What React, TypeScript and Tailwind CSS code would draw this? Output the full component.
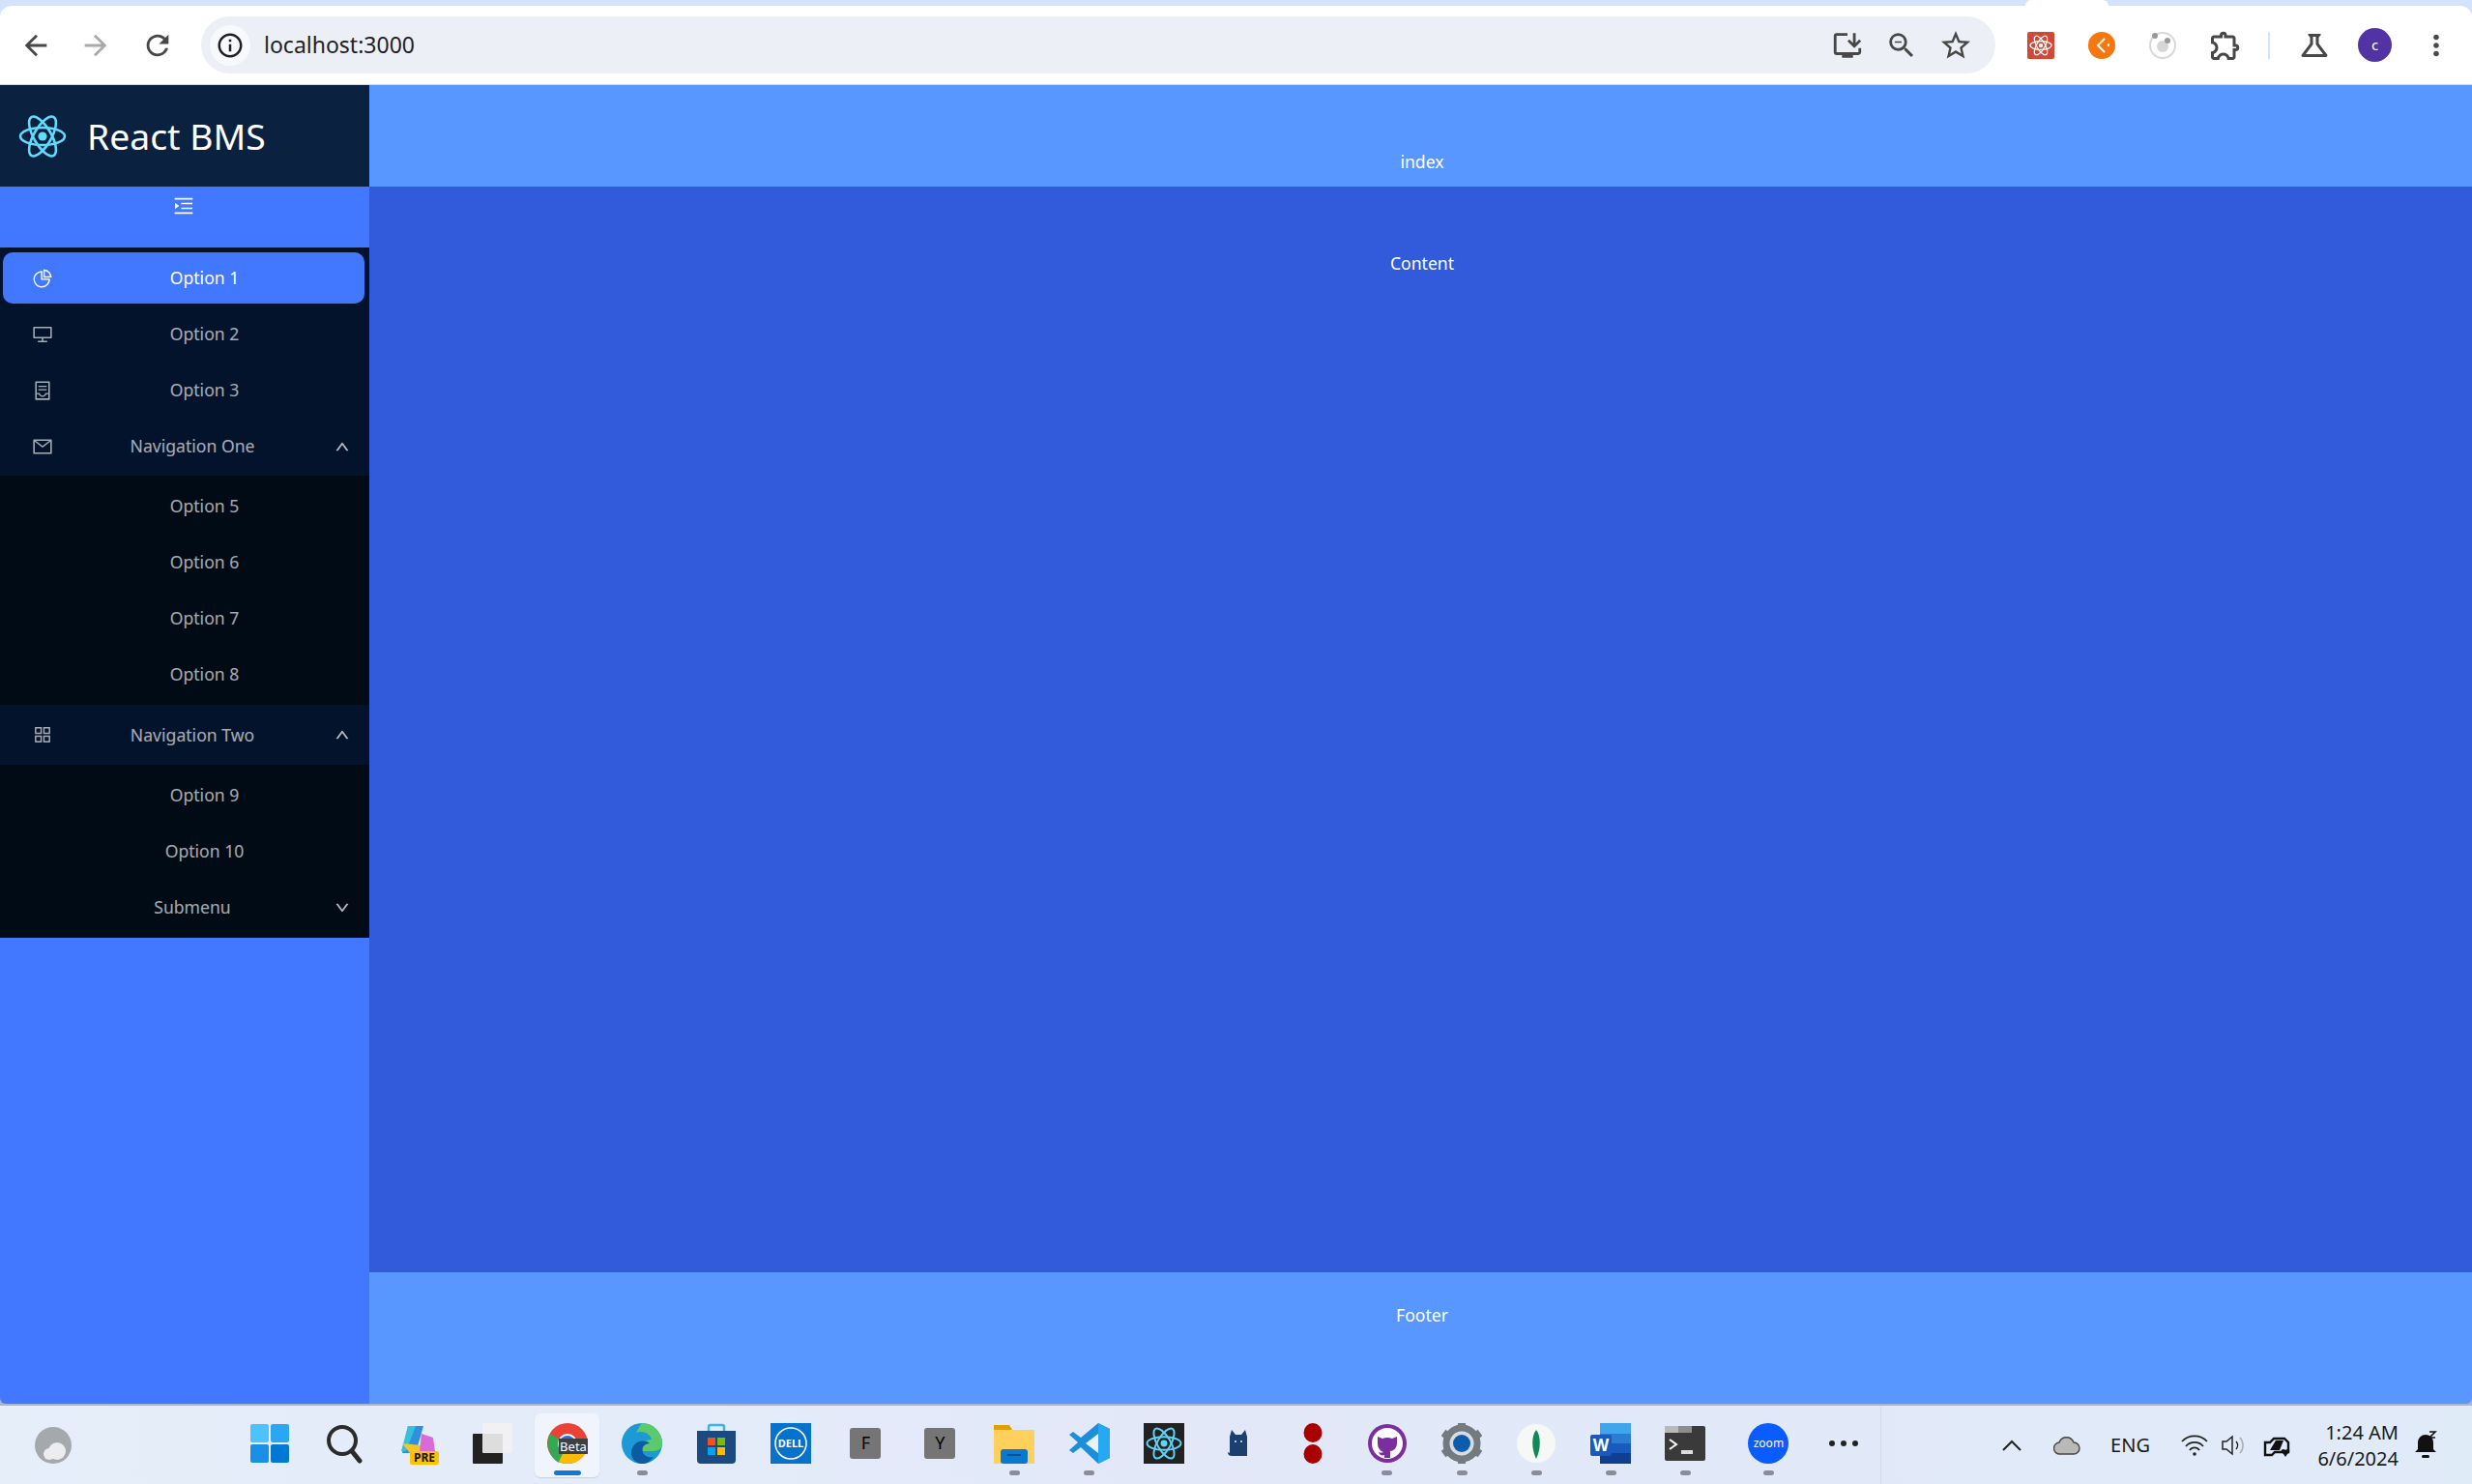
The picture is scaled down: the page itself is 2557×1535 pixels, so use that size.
import { ReactNode } from "react";
import {
  AiOutlineAppstore,
  AiOutlineContainer,
  AiOutlineDesktop,
  AiOutlineDown,
  AiOutlineMail,
  AiOutlineMenuUnfold,
  AiOutlinePieChart,
  AiOutlineUp,
} from "react-icons/ai";
import {
  MdArrowBack,
  MdArrowForward,
  MdInstallDesktop,
  MdMoreVert,
  MdOutlineExtension,
  MdOutlineInfo,
  MdOutlineScience,
  MdRefresh,
  MdStarBorder,
  MdZoomOut,
} from "react-icons/md";

const Atom = ({ size, color }: { size: number; color: string }) => (
  <svg width={size} height={size} viewBox="0 0 50 50" fill="none" stroke={color} strokeWidth="2.6">
    <ellipse cx="25" cy="25" rx="23" ry="9" />
    <ellipse cx="25" cy="25" rx="23" ry="9" transform="rotate(60 25 25)" />
    <ellipse cx="25" cy="25" rx="23" ry="9" transform="rotate(120 25 25)" />
    <circle cx="25" cy="25" r="4.6" fill={color} stroke="none" />
  </svg>
);

const MenuItem = ({
  icon,
  label,
  active,
  chevron,
}: {
  icon?: ReactNode;
  label: string;
  active?: boolean;
  chevron?: "up" | "down";
}) => (
  <div
    className={
      active
        ? "flex h-[53px] items-center rounded-[10px] bg-[#4178ff] text-white ml-[3px] mr-[5px] pl-[30px] pr-[20px]"
        : chevron
          ? "flex h-[53px] items-center text-white/65 ml-[3px] mr-[5px] pl-[30px] pr-[15px]"
          : "flex h-[53px] items-center text-white/65 ml-[3px] mr-[5px] pl-[30px] pr-[20px]"
    }
  >
    <span className="flex w-[22px] justify-center text-[22px]">{icon}</span>
    <span className="ml-[11px] flex-1 text-center">{label}</span>
    {chevron && (
      <span className="ml-[14px] flex w-[16px] justify-center text-[16px]">
        {chevron === "up" ? (
          <AiOutlineUp stroke="currentColor" strokeWidth={40} />
        ) : (
          <AiOutlineDown stroke="currentColor" strokeWidth={40} />
        )}
      </span>
    )}
  </div>
);

const Sidebar = () => (
  <aside className="flex w-[382px] shrink-0 flex-col bg-[#4178ff] font-['Noto_Sans',sans-serif] text-[17.6px]">
    <div className="flex h-[105px] items-center bg-[#0a2240] pl-[19px] text-white">
      <Atom size={50} color="#61dafb" />
      <span className="ml-[21px] text-[37.3px] leading-none">React BMS</span>
    </div>
    <div className="flex h-[63px] justify-center pt-[8px] pr-[2px] text-[24px] text-white">
      <AiOutlineMenuUnfold />
    </div>
    <div className="bg-[#03132c] pt-[5px]">
      <div className="flex flex-col gap-[5px]">
        <MenuItem active icon={<AiOutlinePieChart />} label="Option 1" />
        <MenuItem icon={<AiOutlineDesktop />} label="Option 2" />
        <MenuItem icon={<AiOutlineContainer />} label="Option 3" />
        <MenuItem icon={<AiOutlineMail />} label="Navigation One" chevron="up" />
      </div>
      <div className="mt-[4px] flex flex-col gap-[5px] bg-[#010b15] py-[5px]">
        <MenuItem label="Option 5" />
        <MenuItem label="Option 6" />
        <MenuItem label="Option 7" />
        <MenuItem label="Option 8" />
      </div>
      <div className="py-[4.5px]">
        <MenuItem icon={<AiOutlineAppstore />} label="Navigation Two" chevron="up" />
      </div>
      <div className="flex flex-col gap-[5px] bg-[#010b15] py-[5px]">
        <MenuItem label="Option 9" />
        <MenuItem label="Option 10" />
        <MenuItem label="Submenu" chevron="down" />
      </div>
    </div>
  </aside>
);

const Toolbar = () => (
  <div className="relative z-10 shrink-0 bg-[#d3e3fd] pt-[6px]">
    <div className="absolute top-0 left-[2095px] h-[6px] w-[86px] rounded-t-[8px] bg-white" />
    <div className="flex h-[82px] items-center rounded-t-[12px] border-b border-[#d5d7dc] bg-white pl-[20px] text-[#474747]">
      <MdArrowBack size={34} />
      <MdArrowForward size={34} className="ml-[28px] text-[#a9a9a9]" />
      <MdRefresh size={34} className="ml-[30px]" />
      <div className="ml-[28px] flex h-[59px] w-[1856px] items-center rounded-full bg-[#edeff7] pl-[9px]">
        <span className="flex h-[42px] w-[42px] items-center justify-center rounded-full bg-[#f8f9fd] text-[#1f1f1f]">
          <MdOutlineInfo size={30} />
        </span>
        <span className="ml-[14px] flex-1 font-['Noto_Sans',sans-serif] text-[23px] text-[#1f1f1f]">localhost:3000</span>
        <MdInstallDesktop size={34} />
        <MdZoomOut size={34} className="ml-[22px]" />
        <MdStarBorder size={36} className="ml-[21px] mr-[23px]" />
      </div>
      <div className="ml-[33px] flex h-[28px] w-[28px] items-center justify-center rounded-[2px] bg-[#d14836]">
        <Atom size={24} color="#ffffff" />
      </div>
      <svg width="28" height="28" viewBox="0 0 28 28" className="ml-[35px]">
        <circle cx="14" cy="14" r="14" fill="#f6760f" />
        <path d="M17 7l-7 7 7 7M21 12v3" fill="none" stroke="#fff" strokeWidth="2" />
      </svg>
      <svg width="30" height="30" viewBox="0 0 30 30" className="ml-[34px]">
        <circle cx="15" cy="15" r="13" fill="none" stroke="#d8d8d8" strokeWidth="2" />
        <circle cx="15" cy="16" r="6" fill="#d6d6d6" />
        <circle cx="7" cy="5" r="3" fill="#999" />
        <circle cx="20" cy="10" r="3" fill="#999" />
      </svg>
      <MdOutlineExtension size={36} className="ml-[32px]" />
      <span className="ml-[26px] h-[28px] w-[2px] bg-[#d3e3fd]" />
      <MdOutlineScience size={36} className="ml-[28px]" />
      <span className="ml-[27px] flex h-[35px] w-[35px] items-center justify-center rounded-full bg-[#5233a6] font-['Noto_Sans',sans-serif] text-[15px] text-white">
        c
      </span>
      <MdMoreVert size={34} className="ml-[29px]" />
    </div>
  </div>
);

const Dot = ({ active }: { active?: boolean }) => (
  <span className={active ? "h-[5px] w-[28px] rounded-full bg-[#0f78d4]" : "h-[5px] w-[11px] rounded-full bg-[#8a8d96]"} />
);

const TaskIcon = ({ children, dot, active }: { children: ReactNode; dot?: boolean; active?: boolean }) => (
  <div className="relative flex h-[81px] w-[77.1px] shrink-0 items-center justify-center pb-[4px]">
    {active && <div className="absolute top-[8px] left-[5px] h-[66px] w-[67px] rounded-[6px] bg-[#f0f5fd] shadow-[0_1px_1px_#c9d2e0]" />}
    <div className="relative flex h-[44px] w-[44px] items-center justify-center">{children}</div>
    {(dot || active) && (
      <div className="absolute top-[67px] left-0 flex w-full justify-center">
        <Dot active={active} />
      </div>
    )}
  </div>
);

const LetterTile = ({ letter }: { letter: string }) => (
  <span className="flex h-[32px] w-[32px] items-center justify-center rounded-[3px] bg-[#757575] font-['Noto_Sans',sans-serif] text-[18px] text-black">
    {letter}
  </span>
);

const Taskbar = () => (
  <div className="flex h-[81px] shrink-0 items-center bg-gradient-to-r from-[#e6eefa] via-[#e2e8f8] to-[#e0ebf8] font-['Noto_Sans',sans-serif]">
    <div className="flex w-[240px] shrink-0 justify-center pr-[130px]">
      <svg width="38" height="42" viewBox="0 0 38 42">
        <circle cx="19" cy="21" r="19" fill="#a4a9ae" />
        <circle cx="23" cy="27" r="9" fill="#eceded" />
        <circle cx="15" cy="30" r="6" fill="#eceded" />
      </svg>
    </div>
    <TaskIcon>
      <svg width="40" height="40" viewBox="0 0 40 40">
        <rect width="19" height="19" rx="2" fill="#4cc2ff" />
        <rect x="21" width="19" height="19" rx="2" fill="#2aa6f2" />
        <rect y="21" width="19" height="19" rx="2" fill="#1a8fe6" />
        <rect x="21" y="21" width="19" height="19" rx="2" fill="#0078d4" />
      </svg>
    </TaskIcon>
    <TaskIcon>
      <svg width="40" height="42" viewBox="0 0 40 42" fill="none" stroke="#2b2b2b">
        <circle cx="18" cy="18" r="14" strokeWidth="4" />
        <path d="M28 29l8 10" strokeWidth="5" strokeLinecap="round" />
      </svg>
    </TaskIcon>
    <TaskIcon>
      <svg width="42" height="44" viewBox="0 0 42 44">
        <path d="M10 4h16l-8 28H4z" fill="#2f8fe0" />
        <path d="M10 4h8L8 30H3z" fill="#37c1d8" />
        <path d="M4 22l8 10h10l2-8z" fill="#f3c623" />
        <path d="M24 12l12 4 2 14H22z" fill="#d86bd8" />
        <rect x="12" y="30" width="30" height="14" rx="2" fill="#fdc200" />
        <text x="27" y="41" textAnchor="middle" fontSize="12" fontWeight="700" fill="#111">PRE</text>
      </svg>
    </TaskIcon>
    <TaskIcon>
      <svg width="42" height="42" viewBox="0 0 42 42">
        <rect x="0" y="11" width="31" height="31" rx="1" fill="#222" />
        <rect x="10" y="0" width="31" height="31" rx="1" fill="#f2f2f2" fillOpacity="0.9" />
      </svg>
    </TaskIcon>
    <TaskIcon active>
      <svg width="42" height="42" viewBox="0 0 42 42">
        <circle cx="21" cy="21" r="21" fill="#ea4335" />
        <path d="M21 21L3 31A21 21 0 0 1 3 11z" fill="#34a853" />
        <path d="M21 21l-9 20a21 21 0 0 1-9-10z" fill="#34a853" />
        <path d="M21 21h21a21 21 0 0 1-21 21 21 21 0 0 1-9-2z" fill="#fbbc04" />
        <circle cx="21" cy="21" r="10" fill="#fff" />
        <circle cx="21" cy="21" r="8" fill="#1a73e8" />
        <rect x="12" y="16" width="30" height="16" fill="#3c4043" />
        <text x="27" y="29" textAnchor="middle" fontSize="13" fill="#fff">Beta</text>
      </svg>
    </TaskIcon>
    <TaskIcon dot>
      <svg width="42" height="42" viewBox="0 0 42 42">
        <circle cx="21" cy="21" r="21" fill="#1c9ad6" />
        <path d="M21 0a21 21 0 0 1 21 21c0 5-4 8-9 8H22c-2-7 2-12 9-12-1-6-10-10-16-7C19 3 20 0 21 0z" fill="#5cc96a" />
        <path d="M22 42C12 42 7 32 12 24c4-6 12-7 17-3-5 0-9 4-7 9 1 4 6 6 11 5-3 4-7 7-11 7z" fill="#0c59a4" />
      </svg>
    </TaskIcon>
    <TaskIcon>
      <svg width="40" height="42" viewBox="0 0 40 42">
        <path d="M12 8V4a2 2 0 0 1 2-2h12a2 2 0 0 1 2 2v4" fill="none" stroke="#36b5f0" strokeWidth="2.5" />
        <path d="M0 8h40v30a4 4 0 0 1-4 4H4a4 4 0 0 1-4-4z" fill="#1b4a80" />
        <rect x="11" y="15" width="8" height="8" fill="#f25022" />
        <rect x="21" y="15" width="8" height="8" fill="#7fba00" />
        <rect x="11" y="25" width="8" height="8" fill="#00a4ef" />
        <rect x="21" y="25" width="8" height="8" fill="#ffb900" />
      </svg>
    </TaskIcon>
    <TaskIcon>
      <svg width="42" height="42" viewBox="0 0 42 42">
        <rect width="42" height="42" fill="#0672cb" />
        <circle cx="21" cy="21" r="16" fill="none" stroke="#fff" strokeWidth="1.6" />
        <text x="21" y="25" textAnchor="middle" fontSize="11" fontWeight="700" fill="#fff">DELL</text>
      </svg>
    </TaskIcon>
    <TaskIcon>
      <LetterTile letter="F" />
    </TaskIcon>
    <TaskIcon>
      <LetterTile letter="Y" />
    </TaskIcon>
    <TaskIcon dot>
      <svg width="42" height="42" viewBox="0 0 42 42">
        <path d="M0 3h16l3 4h23v35H0z" fill="#ffd15c" />
        <path d="M0 2h16l3 5H0z" fill="#e0a100" />
        <rect x="7" y="27" width="28" height="15" rx="3" fill="#0a78d1" />
        <rect x="14" y="32" width="14" height="2" fill="#07508d" />
      </svg>
    </TaskIcon>
    <TaskIcon dot>
      <svg width="42" height="42" viewBox="0 0 42 42">
        <path d="M30 0l12 6v30l-12 6-18-17-8 6-4-3 9-8-9-8 4-3 8 6z" fill="#1c8fd9" />
        <path d="M30 11L17 21l13 10z" fill="#eaf1fb" />
        <path d="M30 0l12 6v30l-12 6z" fill="#27a8f2" />
      </svg>
    </TaskIcon>
    <TaskIcon>
      <span className="flex h-[42px] w-[42px] items-center justify-center bg-[#222]">
        <Atom size={38} color="#5ed3f3" />
      </span>
    </TaskIcon>
    <TaskIcon>
      <svg width="30" height="30" viewBox="0 0 30 30">
        <path d="M8 28c-2 0-4-1-4-4l2 1V8l2-7 4 5h6l4-5 2 7v20z" fill="#1c3f70" />
        <circle cx="12" cy="13" r="1" fill="#cfe" />
        <circle cx="18" cy="13" r="1" fill="#cfe" />
      </svg>
    </TaskIcon>
    <TaskIcon>
      <svg width="20" height="42" viewBox="0 0 20 42">
        <ellipse cx="10" cy="10" rx="9.5" ry="10" fill="#a80000" />
        <ellipse cx="10" cy="32" rx="9.5" ry="10" fill="#a80000" />
      </svg>
    </TaskIcon>
    <TaskIcon dot>
      <svg width="40" height="40" viewBox="0 0 40 40">
        <circle cx="20" cy="20" r="20" fill="#7b2f9e" />
        <circle cx="20" cy="20" r="16" fill="#fff" />
        <path d="M10 13l5 2a15 15 0 0 1 10 0l5-2v7c0 5-4 8-7 8v7h-6v-3c-3 1-5 0-6-3 2 1 3 1 5 0-3-1-6-4-6-9z" fill="#7b2f9e" />
      </svg>
    </TaskIcon>
    <TaskIcon dot>
      <svg width="42" height="42" viewBox="0 0 42 42">
        <circle cx="21" cy="21" r="16" fill="none" stroke="#737a80" strokeWidth="7" />
        <path d="M21 0v8M21 34v8M2 10l7 5M33 27l7 5M2 32l7-5M33 15l7-5" stroke="#737a80" strokeWidth="8" />
        <circle cx="21" cy="21" r="12" fill="#d6dce2" />
        <circle cx="21" cy="21" r="9" fill="#0b5cad" />
      </svg>
    </TaskIcon>
    <TaskIcon dot>
      <svg width="40" height="40" viewBox="0 0 40 40">
        <circle cx="20" cy="20" r="20" fill="#f6f8f6" />
        <path d="M20 6c5 6 5 20 0 30-5-10-5-24 0-30z" fill="#0e8a5a" />
      </svg>
    </TaskIcon>
    <TaskIcon dot>
      <svg width="42" height="42" viewBox="0 0 42 42">
        <rect x="10" width="32" height="11" fill="#41a5ee" />
        <rect x="10" y="11" width="32" height="10" fill="#2b7cd3" />
        <rect x="10" y="21" width="32" height="10" fill="#185abd" />
        <rect x="10" y="31" width="32" height="11" fill="#103f91" />
        <rect y="12" width="22" height="22" rx="2" fill="#185abd" />
        <text x="11" y="29" textAnchor="middle" fontSize="17" fontWeight="700" fill="#fff">W</text>
      </svg>
    </TaskIcon>
    <TaskIcon dot>
      <svg width="42" height="36" viewBox="0 0 42 36">
        <rect width="42" height="36" rx="2" fill="#3a3a3a" />
        <rect width="14" height="7" fill="#b9b9b9" />
        <rect x="14" width="14" height="7" fill="#8d8d8d" />
        <path d="M5 14l7 5-7 5" fill="none" stroke="#fff" strokeWidth="2" />
        <rect x="17" y="25" width="12" height="4" fill="#ddd" />
      </svg>
    </TaskIcon>
    <div className="w-[9px] shrink-0" />
    <TaskIcon dot>
      <span className="flex h-[42px] w-[42px] items-center justify-center rounded-full bg-[#0b5cff] text-[12px] text-white">zoom</span>
    </TaskIcon>
    <TaskIcon>
      <span className="flex gap-[6px]">
        <span className="h-[6px] w-[6px] rounded-full bg-[#222]" />
        <span className="h-[6px] w-[6px] rounded-full bg-[#222]" />
        <span className="h-[6px] w-[6px] rounded-full bg-[#222]" />
      </span>
    </TaskIcon>
    <div className="h-full w-px bg-[#d5dcea]" />
    <div className="flex flex-1 items-center pl-[125px] text-[#1a1a1a]">
      <svg width="20" height="12" viewBox="0 0 20 12" fill="none" stroke="#222" strokeWidth="2">
        <path d="M1 11l9-9 9 9" />
      </svg>
      <svg width="28" height="20" viewBox="0 0 28 20" className="ml-[33px]">
        <path d="M7 19a6 6 0 0 1-1-12 8 8 0 0 1 15 0 6 6 0 0 1 0 12z" fill="#b9b9b9" stroke="#444" strokeWidth="1.4" />
      </svg>
      <span className="ml-[31px] text-[20px]">ENG</span>
      <svg width="28" height="24" viewBox="0 0 28 24" fill="none" stroke="#222" strokeWidth="1.8" className="ml-[32px]">
        <path d="M1 8a18 18 0 0 1 26 0M5 13a12 12 0 0 1 18 0M9 17a6 6 0 0 1 10 0" />
        <circle cx="14" cy="21" r="1.8" fill="#222" stroke="none" />
      </svg>
      <svg width="28" height="24" viewBox="0 0 28 24" fill="none" stroke="#222" strokeWidth="1.5" className="ml-[13px]">
        <path d="M2 8h4l6-5v18l-6-5H2z" />
        <path d="M16 8a6 6 0 0 1 0 8" />
        <path d="M20 4a12 12 0 0 1 0 16" stroke="#aaa" />
      </svg>
      <svg width="30" height="30" viewBox="0 0 30 30" className="ml-[16px]">
        <path d="M2 12h5l4-4h11l4 4v10H12l-3 3H2z" fill="none" stroke="#111" strokeWidth="2.4" />
        <path d="M7 20l6-10h8l-4 10z" fill="#111" />
        <path d="M21 24c-3-2-3-5 0-5 1 0 2 1 2 1s1-1 2-1c3 0 3 3 0 5l-2 3z" fill="#111" />
      </svg>
      <div className="ml-[10px] flex w-[100px] flex-col items-end text-[20px] leading-[27px]">
        <span>1:24 AM</span>
        <span>6/6/2024</span>
      </div>
      <svg width="24" height="32" viewBox="0 0 24 32" className="ml-[17px]">
        <path d="M11 5a8 8 0 0 0-8 8v7l-3 3h22l-3-3v-7a8 8 0 0 0-8-8z" fill="#111" />
        <rect x="7" y="26" width="8" height="3" rx="1.5" fill="#111" />
        <path d="M15 2h6l-6 6h6" fill="none" stroke="#111" strokeWidth="1.6" />
      </svg>
    </div>
  </div>
);

const App = () => (
  <div className="flex h-[1535px] w-[2557px] flex-col overflow-hidden bg-[#a9b5cd]">
    <Toolbar />
    <div className="mb-[2px] flex min-h-0 flex-1 overflow-hidden rounded-b-[6px]">
      <Sidebar />
      <main className="flex flex-1 flex-col font-['Noto_Sans',sans-serif] text-[17.6px] text-white">
        <div className="flex h-[105px] items-end justify-center bg-[#5797ff] pb-[13px] pl-[3px]">index</div>
        <div className="flex-1 bg-[#315bdb] pt-[66px] pl-[3px] text-center">Content</div>
        <div className="flex h-[136px] justify-center bg-[#5797ff] pt-[31px] pl-[3px]">Footer</div>
      </main>
    </div>
    <Taskbar />
  </div>
);

export default App;
